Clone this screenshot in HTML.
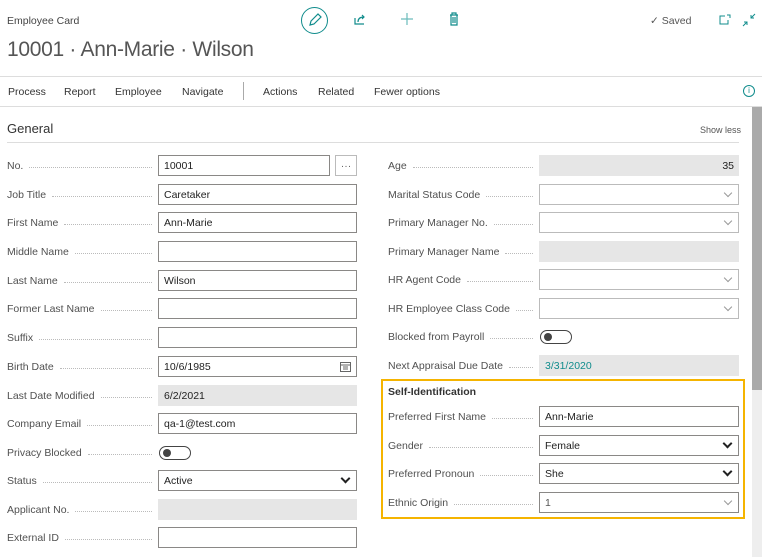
<!DOCTYPE html>
<html><head><meta charset="utf-8"><style>
*{box-sizing:border-box;margin:0;padding:0}
body{width:769px;height:557px;overflow:hidden;background:#fff;font-family:"Liberation Sans",sans-serif;color:#333;position:relative;font-size:11px}
.a{position:absolute}
.lbl{position:absolute;color:#505050;font-size:10.5px;white-space:nowrap;display:flex;align-items:center;height:21px;width:145px}
.lbl i{flex:1;border-bottom:1px dotted #bbb;margin:4px 0 0 6px;height:1px}
.in{position:absolute;height:21px;border:1px solid #8a8886;background:#fff;font-size:10.5px;color:#222;padding-left:5px;display:flex;align-items:center}
.ro{background:#e6e6e6;border-color:#e6e6e6}
.chev{position:absolute;right:7px;top:5px;width:6px;height:6px;border-right:1px solid #999;border-bottom:1px solid #999;transform:rotate(45deg)}
.chevb{position:absolute;right:7px;top:4px;width:7px;height:7px;border-right:2px solid #222;border-bottom:2px solid #222;transform:rotate(45deg)}
.tog{position:absolute;width:32px;height:14px;border:1px solid #444;border-radius:8px}
.tog:after{content:"";position:absolute;left:3px;top:2px;width:8px;height:8px;border-radius:50%;background:#444}
.nav{position:absolute;top:86px;font-size:10.5px;color:#333}
</style></head><body>
<div class="a" style="left:7px;top:15px;font-size:10.5px;color:#444">Employee Card</div>
<div class="a" style="left:7px;top:38px;font-size:21px;color:#555;letter-spacing:-0.3px">10001 · Ann-Marie · Wilson</div>
<div class="a" style="left:301px;top:7px;width:27px;height:27px;border:1.3px solid #108c8c;border-radius:50%"></div>
<svg class="a" style="left:301px;top:7px" width="27" height="27"><path d="M9 18l1-4 7-7 3 3-7 7z" fill="none" stroke="#108c8c" stroke-width="1.2"/></svg>
<svg class="a" style="left:353px;top:12px" width="14" height="14"><path d="M2 6v6h9M5 10c0-4 3-5 6-5M9 3l2 2-2 2" fill="none" stroke="#108c8c" stroke-width="1.2"/></svg>
<svg class="a" style="left:400px;top:12px" width="14" height="14"><path d="M7 1v12M1 7h12" stroke="#6cbcbc" stroke-width="1.2"/></svg>
<svg class="a" style="left:448px;top:12px" width="12" height="14"><path d="M2 3h8M4 3V1h4v2M3 3v10h6V3M5 5v6M7 5v6" fill="none" stroke="#108c8c" stroke-width="1.2"/></svg>
<div class="a" style="left:650px;top:15px;font-size:10.5px;color:#555">✓ Saved</div>
<svg class="a" style="left:719px;top:14px" width="12" height="12"><path d="M6 2H1v8h8V6M8 1h3v3" fill="none" stroke="#108c8c"/></svg>
<svg class="a" style="left:742px;top:13px" width="14" height="14"><path d="M13 1l-4 4M9 2v3h3M1 13l4-4M5 12V9H2" fill="none" stroke="#108c8c"/></svg>
<div class="a" style="left:0;top:76px;width:762px;height:1px;background:#ddd"></div>
<div class="nav" style="left:8px">Process</div><div class="nav" style="left:64px">Report</div><div class="nav" style="left:115px">Employee</div><div class="nav" style="left:182px">Navigate</div>
<div class="a" style="left:243px;top:82px;width:1px;height:18px;background:#aaa"></div>
<div class="nav" style="left:263px">Actions</div><div class="nav" style="left:318px">Related</div><div class="nav" style="left:374px">Fewer options</div>
<div class="a" style="left:743px;top:85px;width:12px;height:12px;border:1px solid #108c8c;border-radius:50%;font-size:8px;color:#108c8c;text-align:center;line-height:10px">i</div>
<div class="a" style="left:0;top:106px;width:762px;height:1px;background:#ddd"></div>
<div class="a" style="left:7px;top:121px;font-size:13px;color:#333">General</div>
<div class="a" style="left:700px;top:125px;font-size:9px;color:#555">Show less</div>
<div class="a" style="left:7px;top:142px;width:732px;height:1px;background:#ddd"></div>
<div class="a" style="left:752px;top:107px;width:10px;height:450px;background:#eee"></div>
<div class="a" style="left:752px;top:107px;width:10px;height:283px;background:#aaa"></div>

<div class="lbl" style="left:7px;top:155px">No.<i></i></div><div class="in" style="left:158px;top:155px;width:172px">10001</div><div class="in" style="left:335px;top:155px;width:22px;border-color:#bbb;padding:0;justify-content:center;color:#666">···</div>
<div class="lbl" style="left:7px;top:184px">Job Title<i></i></div><div class="in" style="left:158px;top:184px;width:199px">Caretaker</div>
<div class="lbl" style="left:7px;top:212px">First Name<i></i></div><div class="in" style="left:158px;top:212px;width:199px">Ann-Marie</div>
<div class="lbl" style="left:7px;top:241px">Middle Name<i></i></div><div class="in" style="left:158px;top:241px;width:199px"></div>
<div class="lbl" style="left:7px;top:270px">Last Name<i></i></div><div class="in" style="left:158px;top:270px;width:199px">Wilson</div>
<div class="lbl" style="left:7px;top:298px">Former Last Name<i></i></div><div class="in" style="left:158px;top:298px;width:199px"></div>
<div class="lbl" style="left:7px;top:327px">Suffix<i></i></div><div class="in" style="left:158px;top:327px;width:199px"></div>
<div class="lbl" style="left:7px;top:356px">Birth Date<i></i></div><div class="in" style="left:158px;top:356px;width:199px">10/6/1985<svg style="position:absolute;right:5px;top:4px" width="11" height="11"><rect x=".5" y="1.5" width="10" height="9" fill="none" stroke="#666"/><path d="M1 4h9M3 6h5M3 8h5" stroke="#666"/></svg></div>
<div class="lbl" style="left:7px;top:385px">Last Date Modified<i></i></div><div class="in ro" style="left:158px;top:385px;width:199px">6/2/2021</div>
<div class="lbl" style="left:7px;top:413px">Company Email<i></i></div><div class="in" style="left:158px;top:413px;width:199px">qa-1@test.com</div>
<div class="lbl" style="left:7px;top:442px">Privacy Blocked<i></i></div><div class="tog" style="left:159px;top:446px"></div>
<div class="lbl" style="left:7px;top:470px">Status<i></i></div><div class="in" style="left:158px;top:470px;width:199px">Active<div class="chevb"></div></div>
<div class="lbl" style="left:7px;top:499px">Applicant No.<i></i></div><div class="in ro" style="left:158px;top:499px;width:199px"></div>
<div class="lbl" style="left:7px;top:527px">External ID<i></i></div><div class="in" style="left:158px;top:527px;width:199px"></div>

<div class="lbl" style="left:388px;top:155px">Age<i></i></div><div class="in ro" style="left:539px;top:155px;width:200px;justify-content:flex-end;padding-right:4px">35</div>
<div class="lbl" style="left:388px;top:184px">Marital Status Code<i></i></div><div class="in" style="left:539px;top:184px;width:200px;border-color:#bbb"><div class="chev"></div></div>
<div class="lbl" style="left:388px;top:212px">Primary Manager No.<i></i></div><div class="in" style="left:539px;top:212px;width:200px;border-color:#bbb"><div class="chev"></div></div>
<div class="lbl" style="left:388px;top:241px">Primary Manager Name<i></i></div><div class="in ro" style="left:539px;top:241px;width:200px"></div>
<div class="lbl" style="left:388px;top:269px">HR Agent Code<i></i></div><div class="in" style="left:539px;top:269px;width:200px;border-color:#bbb"><div class="chev"></div></div>
<div class="lbl" style="left:388px;top:298px">HR Employee Class Code<i></i></div><div class="in" style="left:539px;top:298px;width:200px;border-color:#bbb"><div class="chev"></div></div>
<div class="lbl" style="left:388px;top:326px">Blocked from Payroll<i></i></div><div class="tog" style="left:540px;top:330px"></div>
<div class="lbl" style="left:388px;top:355px">Next Appraisal Due Date<i></i></div><div class="in ro" style="left:539px;top:355px;width:200px;color:#108c8c">3/31/2020</div>
<div class="a" style="left:381px;top:379px;width:364px;height:140px;border:2px solid #f5b400"></div>
<div class="a" style="left:388px;top:386px;font-size:10.5px;font-weight:bold;color:#333">Self-Identification</div>
<div class="lbl" style="left:388px;top:406px">Preferred First Name<i></i></div><div class="in" style="left:539px;top:406px;width:200px">Ann-Marie</div>
<div class="lbl" style="left:388px;top:435px">Gender<i></i></div><div class="in" style="left:539px;top:435px;width:200px">Female<div class="chevb"></div></div>
<div class="lbl" style="left:388px;top:463px">Preferred Pronoun<i></i></div><div class="in" style="left:539px;top:463px;width:200px">She<div class="chevb"></div></div>
<div class="lbl" style="left:388px;top:492px">Ethnic Origin<i></i></div><div class="in" style="left:539px;top:492px;width:200px;color:#555">1<div class="chev"></div></div>
</body></html>
